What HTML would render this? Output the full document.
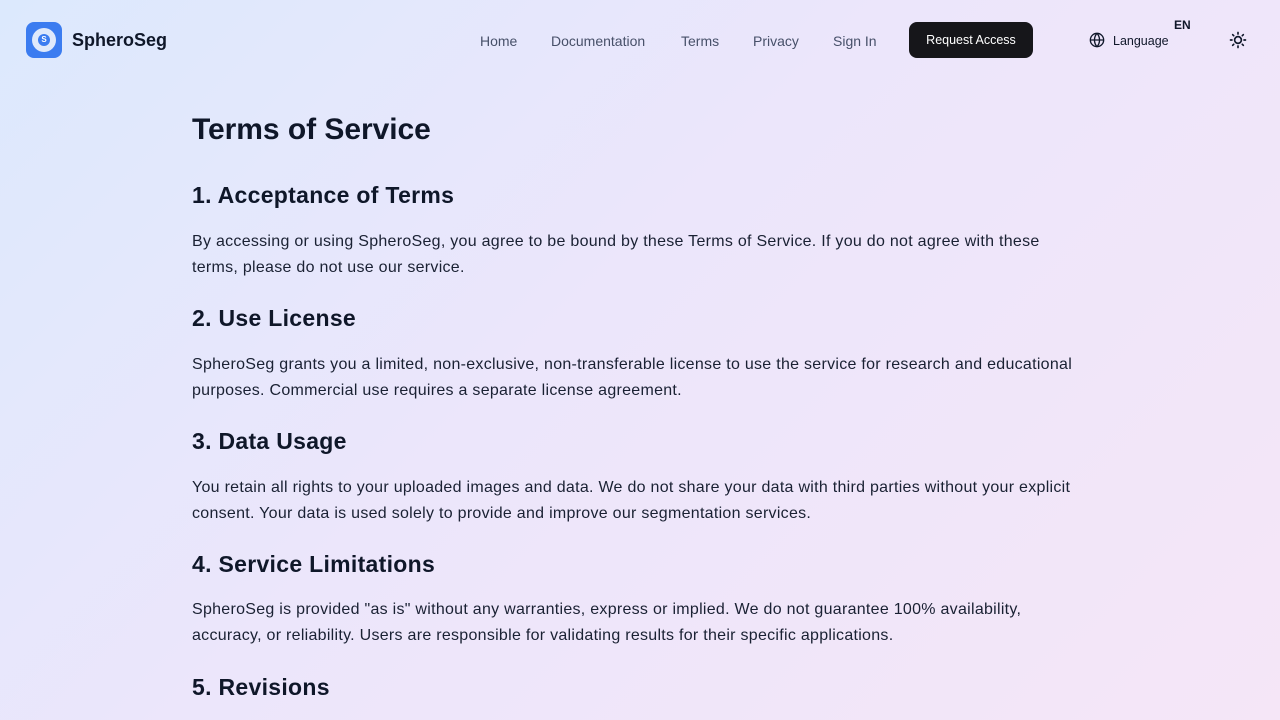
<!DOCTYPE html>
<html><head><meta charset="utf-8"><style>
*{margin:0;padding:0;box-sizing:border-box}
body{width:1280px;height:720px;overflow:hidden;font-family:"Liberation Sans",sans-serif;background:linear-gradient(135deg,#dce9fd 0%,#ece6fb 45%,#f5e6f7 100%);color:#0f1729}
.logo{position:absolute;left:26px;top:22px;width:36px;height:36px;border-radius:8px;background:#3b7cf0}
.logo .c{position:absolute;left:6px;top:6px;width:24px;height:24px;border-radius:50%;background:#dfe9fb}
.logo .d{position:absolute;left:12px;top:12px;width:12px;height:12px;border-radius:50%;background:#3b7cf0;color:#fff;font-size:8px;font-weight:bold;text-align:center;line-height:12px}
.brand{position:absolute;left:72px;top:30px;font-size:18px;font-weight:bold;color:#0f1729}
.nav a{position:absolute;top:33px;font-size:14px;color:#475069;text-decoration:none}
.btn{position:absolute;left:909px;top:22px;width:124px;height:36px;border-radius:8px;background:#16161a;color:#fff;font-size:12.5px;text-align:center;line-height:37px}
.lang{position:absolute;left:1113px;top:34px;font-size:12.5px;color:#0f1729}
.en{position:absolute;left:1174px;top:18px;font-size:12px;font-weight:bold}
main{position:absolute;left:192px;top:0;width:900px}
h1{position:absolute;top:113px;font-size:30px;font-weight:bold;white-space:nowrap;letter-spacing:-0.05px}
h2{position:absolute;font-size:23px;font-weight:bold;white-space:nowrap;letter-spacing:0.3px}
p{position:absolute;font-size:16px;line-height:25.5px;color:#1a2133;width:890px;letter-spacing:0.28px}
</style></head><body>
<div class="logo"><div class="c"></div><div class="d">S</div></div>
<div class="brand">SpheroSeg</div>
<div class="nav"><a style="left:480px">Home</a><a style="left:551px">Documentation</a><a style="left:681px">Terms</a><a style="left:753px">Privacy</a><a style="left:833px">Sign In</a></div>
<div class="btn">Request Access</div>
<svg style="position:absolute;left:1089px;top:32px" width="16" height="16" viewBox="0 0 24 24" fill="none" stroke="#0f1729" stroke-width="2"><circle cx="12" cy="12" r="10"/><path d="M2 12h20M12 2a15 15 0 0 1 0 20M12 2a15 15 0 0 0 0 20"/></svg>
<div class="lang">Language</div><div class="en">EN</div>
<svg style="position:absolute;left:1229px;top:31px" width="18" height="18" viewBox="0 0 24 24" fill="none" stroke="#0f1729" stroke-width="2.2" stroke-linecap="round"><circle cx="12" cy="12" r="4.5"/><path d="M12 2v2M12 20v2M4.9 4.9l1.4 1.4M17.7 17.7l1.4 1.4M2 12h2M20 12h2M4.9 19.1l1.4-1.4M17.7 6.3l1.4-1.4"/></svg>
<main>
<h1>Terms of Service</h1>
<h2 style="top:182px">1. Acceptance of Terms</h2>
<p style="top:229px">By accessing or using SpheroSeg, you agree to be bound by these Terms of Service. If you do not agree with these terms, please do not use our service.</p>
<h2 style="top:305px">2. Use License</h2>
<p style="top:352px">SpheroSeg grants you a limited, non-exclusive, non-transferable license to use the service for research and educational purposes. Commercial use requires a separate license agreement.</p>
<h2 style="top:428px">3. Data Usage</h2>
<p style="top:475px">You retain all rights to your uploaded images and data. We do not share your data with third parties without your explicit consent. Your data is used solely to provide and improve our segmentation services.</p>
<h2 style="top:551px">4. Service Limitations</h2>
<p style="top:597px">SpheroSeg is provided "as is" without any warranties, express or implied. We do not guarantee 100% availability, accuracy, or reliability. Users are responsible for validating results for their specific applications.</p>
<h2 style="top:674px">5. Revisions</h2>
</main>
</body></html>
